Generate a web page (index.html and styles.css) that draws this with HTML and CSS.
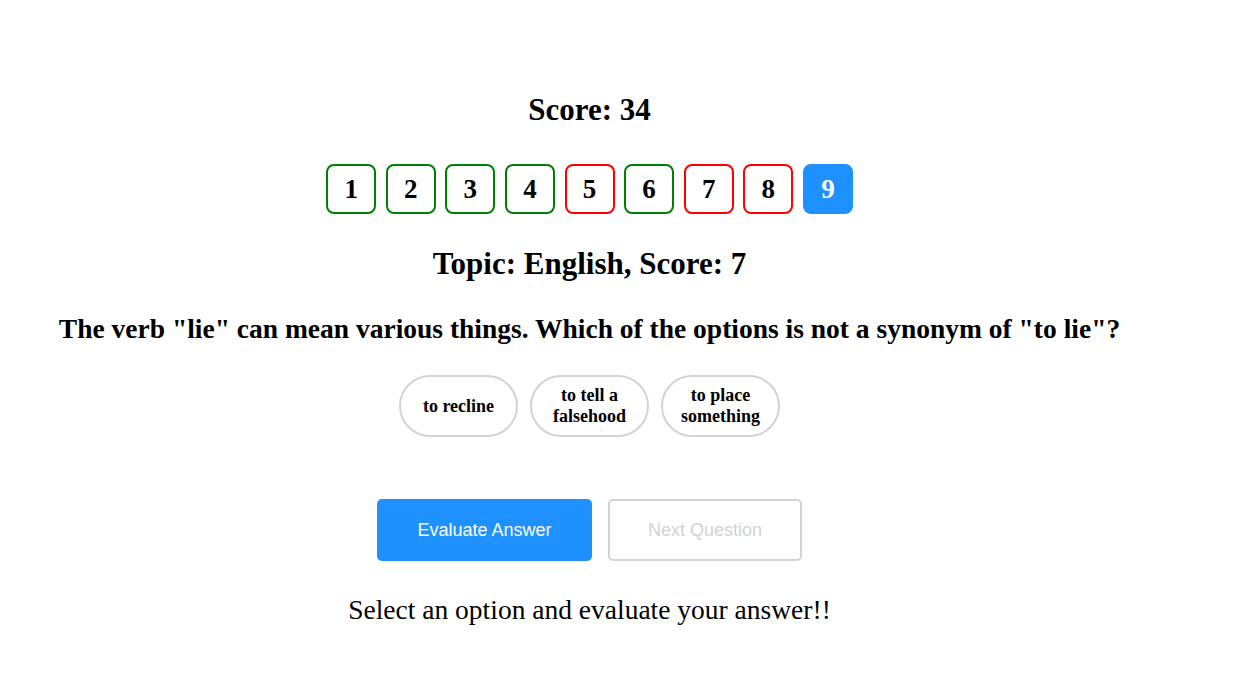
FILE: index.html
```html
<!DOCTYPE html>
<html>
<head>
<meta charset="utf-8">
<link rel="stylesheet" href="styles.css">
</head>
<body>
<div class="app">
  <h1 class="score">Score: 34</h1>
  <div class="nums">
    <div class="num ok">1</div>
    <div class="num ok">2</div>
    <div class="num ok">3</div>
    <div class="num ok">4</div>
    <div class="num bad">5</div>
    <div class="num ok">6</div>
    <div class="num bad">7</div>
    <div class="num bad">8</div>
    <div class="num cur">9</div>
  </div>
  <h1 class="topic">Topic: English, Score: 7</h1>
  <h2 class="question">The verb "lie" can mean various things. Which of the options is not a synonym of "to lie"?</h2>
  <div class="options">
    <button class="opt">to recline</button>
    <button class="opt">to tell a falsehood</button>
    <button class="opt">to place something</button>
  </div>
  <div class="actions">
    <button class="btn primary">Evaluate Answer</button>
    <button class="btn disabled">Next Question</button>
  </div>
  <p class="msg">Select an option and evaluate your answer!!</p>
</div>
</body>
</html>
```
FILE: styles.css
```css
html, body {
  margin: 0;
  padding: 0;
  background: #fff;
}
body {
  font-family: "Liberation Serif", "Times New Roman", serif;
  color: #000;
}
.app {
  width: 1179px;
  display: flex;
  flex-direction: column;
  align-items: center;
  padding-top: 90px;
}
.score {
  font-size: 31px;
  font-weight: bold;
  margin: 0;
  line-height: 40px;
}
.nums {
  display: flex;
  gap: 9.6px;
  margin-top: 34px;
}
.num {
  width: 46px;
  height: 46px;
  border: 2px solid #008000;
  border-radius: 8px;
  display: flex;
  align-items: center;
  justify-content: center;
  font-size: 27px;
  font-weight: bold;
}
.num.bad { border-color: #ff0000; }
.num.cur {
  background: #1e90ff;
  border-color: #1e90ff;
  color: #fff;
}
.topic {
  font-size: 31px;
  font-weight: bold;
  margin: 30px 0 0;
  line-height: 40px;
}
.question {
  font-size: 27.5px;
  font-weight: bold;
  margin: 28px 0 0;
  line-height: 34px;
}
.options {
  display: flex;
  gap: 12px;
  margin-top: 29px;
}
.opt {
  width: 119px;
  height: 62px;
  border: 2px solid #d3d3d3;
  border-radius: 31px;
  background: #fff;
  font-family: "Liberation Serif", "Times New Roman", serif;
  font-size: 18px;
  font-weight: bold;
  color: #000;
  line-height: 21px;
  padding: 0 16px;
}
.actions {
  display: flex;
  gap: 16px;
  margin-top: 62px;
}
.btn {
  height: 62px;
  padding: 0;
  border-radius: 5px;
  font-family: "Liberation Sans", Arial, sans-serif;
  font-size: 18px;
  white-space: nowrap;
}
.btn.primary {
  background: #1e90ff;
  border: none;
  color: #fff;
  width: 215px;
}
.btn.disabled {
  background: #fff;
  border: 2px solid #d3d3d3;
  color: #d3d3d3;
  width: 194px;
}
.msg {
  font-size: 27.5px;
  margin: 32px 0 0;
  line-height: 34px;
}
```
